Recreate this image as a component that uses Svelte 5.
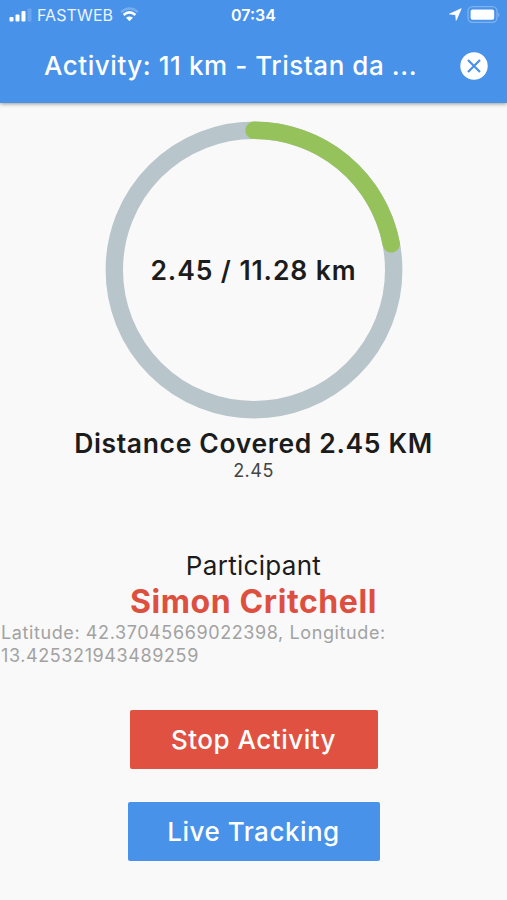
<script>
	let { covered = 2.45, total = 11.28 } = $props();

	const radius = 139.7;
	const circumference = 2 * Math.PI * radius;
	const latitude = "42.37045669022398";
	const longitude = "13.425321943489259";

	// whole percent, rounded up
	let percent = $derived(Math.ceil((covered / total) * 100));
	let progress = $derived((percent / 100) * circumference);
</script>

<div class="screen">
	<header>
		<div class="status-bar">
			<div class="carrier">
				<svg width="23" height="14" viewBox="0 0 23 14" fill="#fff">
					<rect x="0.5" y="9" width="4" height="4.5" rx="1" />
					<rect x="6.5" y="6.5" width="4" height="7" rx="1" />
					<rect x="12.5" y="3" width="4" height="10.5" rx="1" />
					<rect x="18.5" y="0.5" width="4" height="13" rx="1" opacity="0.2" />
				</svg>
				<span class="carrier-name">FASTWEB</span>
				<svg class="wifi" width="19" height="15" viewBox="0 0 19 15" fill="none" stroke="#fff" stroke-width="2.2">
					<path d="M1 5.2Q9.5-2.2 18 5.2" opacity="0.25" />
					<path d="M3.6 8Q9.5 2.8 15.4 8" stroke-width="2.6" />
					<path d="M9.5 14.2L6 10.8Q9.5 8 13 10.8Z" fill="#fff" stroke="none" />
				</svg>
			</div>
			<span class="clock">07:34</span>
			<div class="indicators">
				<svg width="13" height="13" viewBox="0 0 13 13" fill="#fff" stroke="#fff" stroke-width="0.8" stroke-linejoin="round">
					<path d="M12.2 0.7L7.2 12.3L6.7 6.7L0.6 6Z" />
				</svg>
				<svg width="33" height="18" viewBox="0 0 33 18">
					<rect x="1" y="0.7" width="29" height="15.6" rx="4.5" fill="none" stroke="#fff" stroke-opacity="0.3" stroke-width="1.3" />
					<rect x="3.6" y="3.4" width="23.6" height="10.4" rx="2" fill="#fff" />
					<path d="M31.3 6.2v5Q33.3 8.7 31.3 6.2Z" fill="#fff" opacity="0.4" />
				</svg>
			</div>
		</div>
		<div class="app-bar">
			<h1>Activity: 11 km - Tristan da ...</h1>
			<button class="close" aria-label="Close">
				<svg width="28" height="28" viewBox="0 0 28 28">
					<circle cx="14" cy="14" r="13.7" fill="#fff" />
					<path d="M8 8L20 20M20 8L8 20" stroke="#4892ea" stroke-width="2.2" />
				</svg>
			</button>
		</div>
	</header>

	<main>
		<div class="ring">
			<svg width="298" height="298" viewBox="0 0 298 298" fill="none" stroke-width="17.4">
				<circle cx="149" cy="149" r={radius} stroke="#b8c5ca" />
				<circle
					cx="149"
					cy="149"
					r={radius}
					stroke="#96c25b"
					stroke-linecap="round"
					stroke-dasharray="{progress} {circumference}"
					transform="rotate(-90 149 149)"
				/>
			</svg>
			<span class="ring-label">{covered} / {total} km</span>
		</div>

		<h2>Distance Covered {covered} KM</h2>
		<p class="distance">{covered}</p>

		<p class="role">Participant</p>
		<p class="name">Simon Critchell</p>
		<p class="location">Latitude: {latitude}, Longitude: {longitude}</p>

		<div class="actions">
			<button class="btn stop">Stop Activity</button>
			<button class="btn track">Live Tracking</button>
		</div>
	</main>
</div>

<style>
	:global(body) {
		margin: 0;
		background: #f9f9f9;
	}
	.screen {
		display: flex;
		flex-direction: column;
		width: 100%;
		height: 900px;
		overflow: hidden;
		background: #f9f9f9;
		color: #1c1c1c;
		font-family: Inter, "Liberation Sans", sans-serif;
	}
	h1, h2, p { margin: 0; }
	svg { display: block; }
	button {
		border: none;
		font-family: inherit;
		cursor: pointer;
	}

	header {
		height: 103px;
		flex-shrink: 0;
		background: #4892ea;
		color: #fff;
		box-shadow: 0 1px 4px rgba(0, 0, 0, 0.4);
	}
	.status-bar {
		display: grid;
		grid-template-columns: 1fr auto 1fr;
		align-items: center;
		height: 29px;
		padding: 0 7px 0 9px;
	}
	.carrier, .indicators {
		display: flex;
		align-items: center;
	}
	.carrier-name {
		margin-left: 5px;
		font-size: 16px;
		letter-spacing: 0.1px;
		opacity: 0.9;
	}
	.wifi { margin-left: 7px; }
	.clock {
		margin-right: 2px;
		font-size: 16px;
		font-weight: 600;
	}
	.indicators {
		justify-content: flex-end;
		gap: 5px;
	}

	.app-bar {
		display: flex;
		align-items: center;
		justify-content: space-between;
		height: 74px;
		padding: 0 19px 0 44px;
	}
	h1 {
		padding-bottom: 2px;
		font-size: 26px;
		font-weight: 500;
		letter-spacing: 0.55px;
		white-space: nowrap;
	}
	.close {
		padding: 0;
		background: none;
	}

	main {
		display: flex;
		flex-direction: column;
		align-items: center;
		padding-top: 18px;
	}
	.ring {
		display: grid;
		place-items: center;
	}
	.ring > * { grid-area: 1 / 1; }
	.ring-label {
		font-size: 26.5px;
		font-weight: 600;
		letter-spacing: 0.9px;
	}
	h2 {
		margin-top: 8px;
		font-size: 26.5px;
		font-weight: 600;
		line-height: 32px;
		letter-spacing: 0.65px;
	}
	.distance {
		font-size: 18px;
		line-height: 23px;
		letter-spacing: 0.5px;
		color: #444;
	}
	.role {
		margin-top: 68px;
		font-size: 26px;
		line-height: 32px;
		letter-spacing: 0.3px;
	}
	.name {
		font-size: 32px;
		font-weight: 700;
		line-height: 39px;
		letter-spacing: 0.6px;
		color: #dd5040;
	}
	.location {
		align-self: stretch;
		padding-left: 1px;
		font-size: 18px;
		line-height: 23px;
		letter-spacing: 0.6px;
		color: #a2a2a2;
	}

	.actions {
		display: flex;
		flex-direction: column;
		align-items: center;
		gap: 33px;
		margin-top: 43px;
	}
	.btn {
		height: 59px;
		padding: 0;
		border-radius: 2px;
		color: #fff;
		font-size: 26px;
		font-weight: 500;
		letter-spacing: 0.5px;
	}
	.stop {
		width: 248px;
		background: #e05141;
	}
	.track {
		width: 252px;
		background: #4892ea;
	}
</style>
